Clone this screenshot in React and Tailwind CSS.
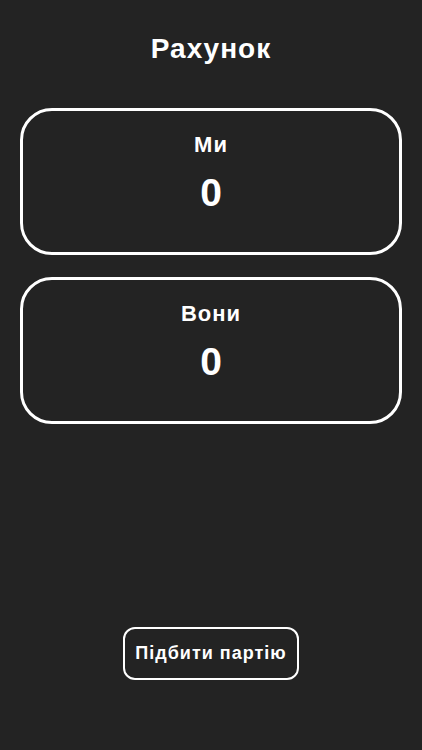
export default function App() {
  return (
    <div className="w-[422px] h-[750px] bg-[#232323] text-white flex flex-col items-center" style={{ fontFamily: '"Liberation Sans", Arial, sans-serif' }}>
      <h1 className="mt-[32px] h-[34px] leading-[34px] text-[28px] font-bold tracking-[1px]">Рахунок</h1>
      <div className="mt-[42px] w-[382px] flex flex-col gap-[22px]">
        {['Ми', 'Вони'].map((name) => (
          <div key={name} className="h-[147px] rounded-[32px] border-[3px] border-white flex flex-col items-center">
            <div className="mt-[21px] h-[26px] leading-[26px] text-[22px] font-bold tracking-[1px]">{name}</div>
            <div className="mt-[12px] h-[46px] leading-[46px] text-[39px] font-bold">0</div>
          </div>
        ))}
      </div>
      <div className="flex-1" />
      <button className="mb-[70px] w-[176px] h-[53px] rounded-[12px] border-2 border-white text-[18px] font-bold tracking-[1px] text-white">
        Підбити партію
      </button>
    </div>
  );
}
